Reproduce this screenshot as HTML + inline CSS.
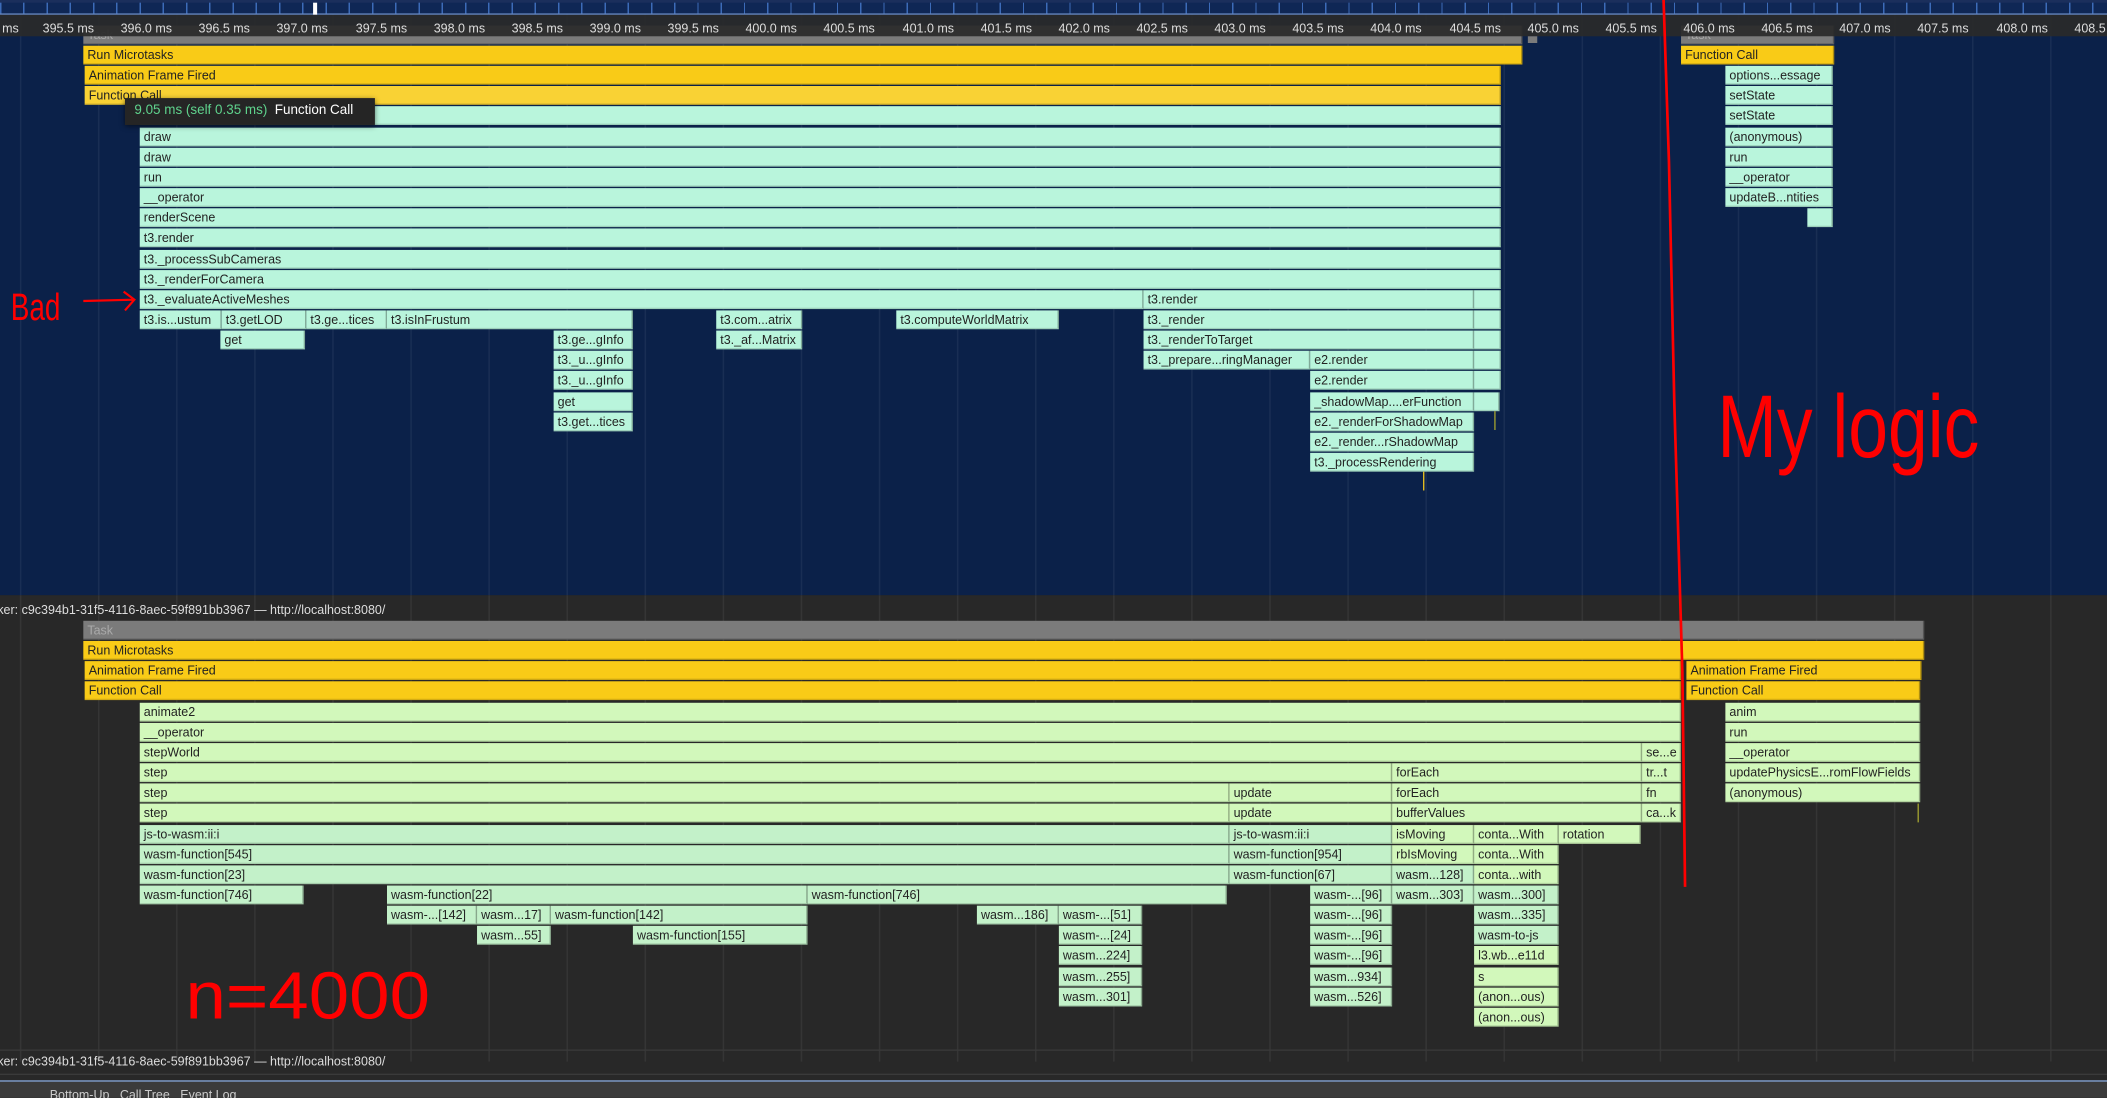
<!DOCTYPE html>
<html><head><meta charset="utf-8"><style>
html,body{margin:0;padding:0;width:2107px;height:1098px;overflow:hidden;background:#282828}
#w{position:absolute;left:0;top:0;width:1568px;height:817px;transform:scale(1.34375);transform-origin:0 0;font-family:"Liberation Sans",sans-serif;overflow:hidden}
.p{position:absolute;left:0;width:1568px}
.b{position:absolute;height:14px;line-height:14px;font-size:9.3px;color:#222;padding-left:3px;box-sizing:border-box;white-space:nowrap;overflow:hidden;border-right:1px solid rgba(0,0,0,.3);border-bottom:1px solid rgba(0,0,0,.15)}
.m{background:#b9f5dc}.y{background:#f9cb17}.g{background:#7b7b7b;color:#aaa}.l{background:#d2f8bb}.w{background:#c3f1c9}
.r0{top:34px}.r1{top:49.15px}.r2{top:64.3px}.r3{top:79.45px}.r4{top:94.6px}.r5{top:109.75px}.r6{top:124.9px}.r7{top:140.05px}.r8{top:155.2px}.r9{top:170.35px}.r10{top:185.5px}.r11{top:200.65px}.r12{top:215.8px}.r13{top:230.95px}.r14{top:246.1px}.r15{top:261.25px}.r16{top:276.4px}.r17{top:291.55px}.r18{top:306.7px}.r19{top:321.85px}.r20{top:337px}
.grid{position:absolute;top:0;bottom:0;left:0;right:0;background:repeating-linear-gradient(90deg,transparent 0,transparent 14.9px,rgba(255,255,255,.06) 14.9px,rgba(255,255,255,.06) 15.9px,transparent 15.9px,transparent 58.12px);background-size:58.12px 100%}
.tl{position:absolute;top:16px;font-size:9.3px;color:#ddd;white-space:nowrap;text-align:right;width:50px}
.hdr{position:absolute;left:0;font-size:9.3px;color:#ddd;white-space:nowrap}
</style></head><body><div id="w">
<div class="p" style="top:0;height:443px;background:#0b2149;overflow:hidden">
<div class="grid"></div>
<div class="b g" style="left:62px;width:1071px;top:19px">Task</div>
<div class="b g" style="left:1251px;width:114px;top:19px">Task</div>
<div class="b y r0" style="left:62px;width:1071px">Run Microtasks</div>
<div class="b y r1" style="left:63px;width:1054px">Animation Frame Fired</div>
<div class="b y r2" style="left:63px;width:1054px;background:#f9d234">Function Call</div>
<div class="b m r3" style="left:104px;width:1013px"></div>
<div class="b m r4" style="left:104px;width:1013px">draw</div>
<div class="b m r5" style="left:104px;width:1013px">draw</div>
<div class="b m r6" style="left:104px;width:1013px">run</div>
<div class="b m r7" style="left:104px;width:1013px">__operator</div>
<div class="b m r8" style="left:104px;width:1013px">renderScene</div>
<div class="b m r9" style="left:104px;width:1013px">t3.render</div>
<div class="b m r10" style="left:104px;width:1013px">t3._processSubCameras</div>
<div class="b m r11" style="left:104px;width:1013px">t3._renderForCamera</div>
<div class="b m r12" style="left:104px;width:747px">t3._evaluateActiveMeshes</div>
<div class="b m r12" style="left:851px;width:246px">t3.render</div>
<div class="b m r12" style="left:1097px;width:20px"></div>
<div class="b m r13" style="left:104px;width:61px">t3.is...ustum</div>
<div class="b m r13" style="left:165px;width:63px">t3.getLOD</div>
<div class="b m r13" style="left:228px;width:60px">t3.ge...tices</div>
<div class="b m r13" style="left:288px;width:183px">t3.isInFrustum</div>
<div class="b m r13" style="left:533px;width:64px">t3.com...atrix</div>
<div class="b m r13" style="left:667px;width:121px">t3.computeWorldMatrix</div>
<div class="b m r13" style="left:851px;width:246px">t3._render</div>
<div class="b m r13" style="left:1097px;width:20px"></div>
<div class="b m r14" style="left:164px;width:63px">get</div>
<div class="b m r14" style="left:412px;width:59px">t3.ge...gInfo</div>
<div class="b m r14" style="left:533px;width:64px">t3._af...Matrix</div>
<div class="b m r14" style="left:851px;width:246px">t3._renderToTarget</div>
<div class="b m r14" style="left:1097px;width:20px"></div>
<div class="b m r15" style="left:412px;width:59px">t3._u...gInfo</div>
<div class="b m r15" style="left:851px;width:124px">t3._prepare...ringManager</div>
<div class="b m r15" style="left:975px;width:122px">e2.render</div>
<div class="b m r15" style="left:1097px;width:20px"></div>
<div class="b m r16" style="left:412px;width:59px">t3._u...gInfo</div>
<div class="b m r16" style="left:975px;width:122px">e2.render</div>
<div class="b m r16" style="left:1097px;width:20px"></div>
<div class="b m r17" style="left:412px;width:59px">get</div>
<div class="b m r17" style="left:975px;width:122px">_shadowMap....erFunction</div>
<div class="b m r17" style="left:1097px;width:19px"></div>
<div class="b m r18" style="left:412px;width:59px">t3.get...tices</div>
<div class="b m r18" style="left:975px;width:122px">e2._renderForShadowMap</div>
<div class="b m r19" style="left:975px;width:122px">e2._render...rShadowMap</div>
<div class="b m r20" style="left:975px;width:122px">t3._processRendering</div>
<div style="position:absolute;left:1059px;top:351px;width:1px;height:14px;background:#e8c020"></div>
<div style="position:absolute;left:1112px;top:306px;width:1px;height:14px;background:#a0a030"></div>
<div class="b y r0" style="left:1251px;width:114px">Function Call</div>
<div class="b m r1" style="left:1284px;width:80px">options...essage</div>
<div class="b m r2" style="left:1284px;width:80px">setState</div>
<div class="b m r3" style="left:1284px;width:80px">setState</div>
<div class="b m r4" style="left:1284px;width:80px">(anonymous)</div>
<div class="b m r5" style="left:1284px;width:80px">run</div>
<div class="b m r6" style="left:1284px;width:80px">__operator</div>
<div class="b m r7" style="left:1284px;width:80px">updateB...ntities</div>
<div class="b m r8" style="left:1345px;width:19px"></div>
<div style="position:absolute;left:93px;top:73px;width:186px;height:20px;background:#252525;box-shadow:0 1px 4px rgba(0,0,0,.6);font-size:10px;line-height:20px;color:#fff;white-space:nowrap;padding-left:7px;box-sizing:border-box"><span style="color:#5fd38d">9.05 ms (self 0.35 ms)</span>&nbsp; Function Call</div>
</div>
<div class="p" style="top:0;height:11px;background:#1b2f5c"></div>
<div class="p" style="top:2px;height:8px;background:repeating-linear-gradient(90deg,#3c6bb8 0,#3c6bb8 1px,#0f2755 1px,#0f2755 17.3px);border-bottom:1px solid #6d8fc8"></div>
<div style="position:absolute;left:233px;top:2px;width:3px;height:9px;background:#fff"></div>
<div class="p" style="top:11px;height:16px;background:#2a2a2a;opacity:.93"></div>
<div class="tl" style="left:-36px">395.0 ms</div>
<div class="tl" style="left:20px">395.5 ms</div>
<div class="tl" style="left:78px">396.0 ms</div>
<div class="tl" style="left:136px">396.5 ms</div>
<div class="tl" style="left:194px">397.0 ms</div>
<div class="tl" style="left:253px">397.5 ms</div>
<div class="tl" style="left:311px">398.0 ms</div>
<div class="tl" style="left:369px">398.5 ms</div>
<div class="tl" style="left:427px">399.0 ms</div>
<div class="tl" style="left:485px">399.5 ms</div>
<div class="tl" style="left:543px">400.0 ms</div>
<div class="tl" style="left:601px">400.5 ms</div>
<div class="tl" style="left:660px">401.0 ms</div>
<div class="tl" style="left:718px">401.5 ms</div>
<div class="tl" style="left:776px">402.0 ms</div>
<div class="tl" style="left:834px">402.5 ms</div>
<div class="tl" style="left:892px">403.0 ms</div>
<div class="tl" style="left:950px">403.5 ms</div>
<div class="tl" style="left:1008px">404.0 ms</div>
<div class="tl" style="left:1067px">404.5 ms</div>
<div class="tl" style="left:1125px">405.0 ms</div>
<div class="tl" style="left:1183px">405.5 ms</div>
<div class="tl" style="left:1241px">406.0 ms</div>
<div class="tl" style="left:1299px">406.5 ms</div>
<div class="tl" style="left:1357px">407.0 ms</div>
<div class="tl" style="left:1415px">407.5 ms</div>
<div class="tl" style="left:1474px">408.0 ms</div>
<div class="tl" style="left:1532px">408.5 ms</div>
<div style="position:absolute;left:1137px;top:27px;width:7px;height:5px;background:#7b7b7b"></div>
<div class="p" style="top:443px;height:374px;background:#282828"></div>
<div class="p" style="top:428px;height:362px;overflow:visible">
<div class="grid" style="top:15px"></div>
<div class="b g r0" style="left:62px;width:1370px">Task</div>
<div class="b y r1" style="left:62px;width:1370px">Run Microtasks</div>
<div class="b y r2" style="left:63px;width:1188px">Animation Frame Fired</div>
<div class="b y r2" style="left:1255px;width:175px">Animation Frame Fired</div>
<div class="b y r3" style="left:63px;width:1188px">Function Call</div>
<div class="b y r3" style="left:1255px;width:174px">Function Call</div>
<div class="b l r4" style="left:104px;width:1147px">animate2</div>
<div class="b l r4" style="left:1284px;width:145px">anim</div>
<div class="b l r5" style="left:104px;width:1147px">__operator</div>
<div class="b l r5" style="left:1284px;width:145px">run</div>
<div class="b l r6" style="left:104px;width:1118px">stepWorld</div>
<div class="b l r6" style="left:1222px;width:29px">se...e</div>
<div class="b l r6" style="left:1284px;width:145px">__operator</div>
<div class="b l r7" style="left:104px;width:932px">step</div>
<div class="b l r7" style="left:1036px;width:186px">forEach</div>
<div class="b l r7" style="left:1222px;width:29px">tr...t</div>
<div class="b l r7" style="left:1284px;width:145px">updatePhysicsE...romFlowFields</div>
<div class="b l r8" style="left:104px;width:811px">step</div>
<div class="b l r8" style="left:915px;width:121px">update</div>
<div class="b l r8" style="left:1036px;width:186px">forEach</div>
<div class="b l r8" style="left:1222px;width:29px">fn</div>
<div class="b l r8" style="left:1284px;width:145px">(anonymous)</div>
<div class="b l r9" style="left:104px;width:811px">step</div>
<div class="b l r9" style="left:915px;width:121px">update</div>
<div class="b l r9" style="left:1036px;width:186px">bufferValues</div>
<div class="b l r9" style="left:1222px;width:29px">ca...k</div>
<div class="b w r10" style="left:104px;width:811px">js-to-wasm:ii:i</div>
<div class="b w r10" style="left:915px;width:121px">js-to-wasm:ii:i</div>
<div class="b l r10" style="left:1036px;width:61px">isMoving</div>
<div class="b l r10" style="left:1097px;width:63px">conta...With</div>
<div class="b l r10" style="left:1160px;width:61px">rotation</div>
<div class="b w r11" style="left:104px;width:811px">wasm-function[545]</div>
<div class="b w r11" style="left:915px;width:121px">wasm-function[954]</div>
<div class="b l r11" style="left:1036px;width:61px">rbIsMoving</div>
<div class="b l r11" style="left:1097px;width:63px">conta...With</div>
<div class="b w r12" style="left:104px;width:811px">wasm-function[23]</div>
<div class="b w r12" style="left:915px;width:121px">wasm-function[67]</div>
<div class="b w r12" style="left:1036px;width:61px">wasm...128]</div>
<div class="b l r12" style="left:1097px;width:63px">conta...with</div>
<div class="b w r13" style="left:104px;width:122px">wasm-function[746]</div>
<div class="b w r13" style="left:288px;width:313px">wasm-function[22]</div>
<div class="b w r13" style="left:601px;width:312px">wasm-function[746]</div>
<div class="b w r13" style="left:975px;width:61px">wasm-...[96]</div>
<div class="b w r13" style="left:1036px;width:61px">wasm...303]</div>
<div class="b w r13" style="left:1097px;width:63px">wasm...300]</div>
<div class="b w r14" style="left:288px;width:67px">wasm-...[142]</div>
<div class="b w r14" style="left:355px;width:55px">wasm...17]</div>
<div class="b w r14" style="left:410px;width:191px">wasm-function[142]</div>
<div class="b w r14" style="left:727px;width:61px">wasm...186]</div>
<div class="b w r14" style="left:788px;width:62px">wasm-...[51]</div>
<div class="b w r14" style="left:975px;width:61px">wasm-...[96]</div>
<div class="b w r14" style="left:1097px;width:63px">wasm...335]</div>
<div class="b w r15" style="left:355px;width:55px">wasm...55]</div>
<div class="b w r15" style="left:471px;width:130px">wasm-function[155]</div>
<div class="b w r15" style="left:788px;width:62px">wasm-...[24]</div>
<div class="b w r15" style="left:975px;width:61px">wasm-...[96]</div>
<div class="b w r15" style="left:1097px;width:63px">wasm-to-js</div>
<div class="b w r16" style="left:788px;width:62px">wasm...224]</div>
<div class="b w r16" style="left:975px;width:61px">wasm-...[96]</div>
<div class="b l r16" style="left:1097px;width:63px">l3.wb...e11d</div>
<div class="b w r17" style="left:788px;width:62px">wasm...255]</div>
<div class="b w r17" style="left:975px;width:61px">wasm...934]</div>
<div class="b l r17" style="left:1097px;width:63px">s</div>
<div class="b w r18" style="left:788px;width:62px">wasm...301]</div>
<div class="b w r18" style="left:975px;width:61px">wasm...526]</div>
<div class="b l r18" style="left:1097px;width:63px">(anon...ous)</div>
<div class="b l r19" style="left:1097px;width:63px">(anon...ous)</div>
<div style="position:absolute;left:1427px;top:170px;width:1px;height:14px;background:#a0a030"></div>
</div>
<div class="hdr" style="top:448px;left:-2px;line-height:12px">ker: c9c394b1-31f5-4116-8aec-59f891bb3967 — http://localhost:8080/</div>
<div class="p" style="top:781px;height:1px;background:#3a3a3a"></div>
<div class="hdr" style="top:784px;left:-2px;line-height:12px">ker: c9c394b1-31f5-4116-8aec-59f891bb3967 — http://localhost:8080/</div>
<div class="p" style="top:799px;height:1px;background:#3a3a3a"></div>
<div class="p" style="top:804px;height:1px;background:#8fb2e8"></div>
<div class="p" style="top:805px;height:12px;background:#3b3b3b"></div>
<div class="hdr" style="top:810px;left:37px;color:#ccc">Bottom-Up &nbsp; Call Tree &nbsp; Event Log</div>
<svg style="position:absolute;left:0;top:0" width="1568" height="817" viewBox="0 0 1568 817">
<path d="M1238 0 L1242 120 L1246 300 L1252 500 L1254 660" stroke="#f00" stroke-width="2" fill="none"/>
<path d="M62 224 L100 223 M92 217 L100 223 L93 231" stroke="#f00" stroke-width="1.6" fill="none"/>
<text x="8" y="238" font-family="Liberation Sans,sans-serif" font-size="28" textLength="37" lengthAdjust="spacingAndGlyphs" fill="#f00">Bad</text>
<text x="1278" y="340" font-family="Liberation Sans,sans-serif" font-size="66" textLength="195" lengthAdjust="spacingAndGlyphs" fill="#f00">My logic</text>
<text x="138" y="758" font-family="Liberation Sans,sans-serif" font-size="50" textLength="182" lengthAdjust="spacingAndGlyphs" fill="#f00">n=4000</text>
</svg>
</div></body></html>
